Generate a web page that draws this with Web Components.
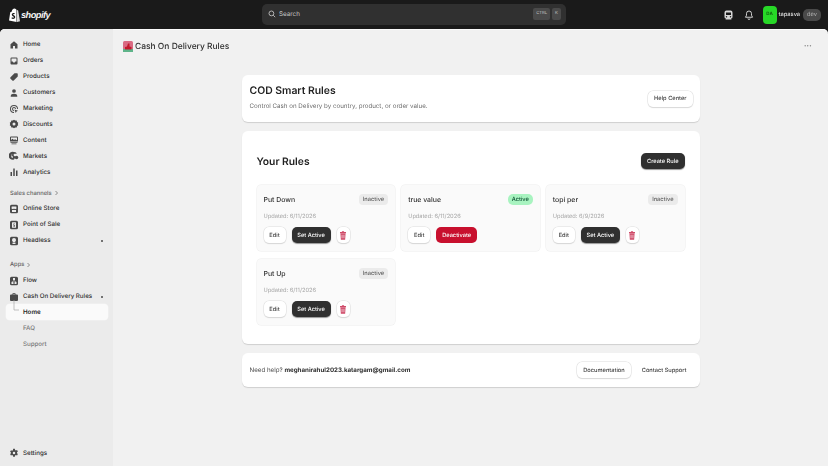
<!DOCTYPE html>
<html lang="en">
<head>
<meta charset="utf-8">
<title>Cash On Delivery Rules</title>
<style>
  html, body { height: 100%; margin: 0; overflow: hidden; }
  body {
    background: #1a1a1a;
    color: #303030;
    font-family: Inter, 'Noto Sans', sans-serif;
    text-rendering: geometricPrecision;
  }
  h2 { color: #222; font-size: 10.400px; font-weight: 600; margin: 0; }
  p { margin: 0; }
  .intro { align-items: center; display: flex; height: 47px; justify-content: space-between; padding: 0 7px 0 8px; }
  .intro p { color: #6b6b6b; font-size: 6.200px; margin: 6.500px 0 3px; }
  .rules { height: 213px; padding: 22px 15px 0; }
  .rules-head { align-items: center; display: flex; height: 16px; justify-content: space-between; }
  .rules-head h2 { font-size: 10.300px; margin-top: 1px; }
  .rules-grid { display: grid; gap: 8px 6px; grid-template-columns: repeat( 3, 1fr ); margin-top: 16px; }
  .help { align-items: center; display: flex; height: 34px; justify-content: space-between; padding: 0 7px 0 8px; }
  .help p { color: #4a4a4a; font-size: 6.200px; }
  .help b { color: #303030; font-weight: 700; }
  .help-links { align-items: center; display: flex; gap: 5px; }
</style>
</head>
<body>
<admin-shell>
  <admin-topbar slot="top"></admin-topbar>
  <admin-nav slot="nav">
    <nav-item icon="home">Home</nav-item>
    <nav-item icon="orders">Orders</nav-item>
    <nav-item icon="tag">Products</nav-item>
    <nav-item icon="person">Customers</nav-item>
    <nav-item icon="target">Marketing</nav-item>
    <nav-item icon="discount">Discounts</nav-item>
    <nav-item icon="content">Content</nav-item>
    <nav-item icon="globe">Markets</nav-item>
    <nav-item icon="bars">Analytics</nav-item>
    <nav-heading>Sales channels</nav-heading>
    <nav-item icon="store">Online Store</nav-item>
    <nav-item icon="pos">Point of Sale</nav-item>
    <nav-item icon="headless" dot>Headless</nav-item>
    <nav-heading gap>Apps</nav-heading>
    <nav-item icon="flow">Flow</nav-item>
    <nav-item icon="bag" dot>Cash On Delivery Rules</nav-item>
    <nav-item sub selected>Home</nav-item>
    <nav-item sub muted>FAQ</nav-item>
    <nav-item sub muted>Support</nav-item>
    <nav-item slot="bottom" icon="gear">Settings</nav-item>
  </admin-nav>
  <admin-page slot="main">
    <ui-card class="intro">
      <div>
        <h2>COD Smart Rules</h2>
        <p>Control Cash on Delivery by country, product, or order value.</p>
      </div>
      <ui-button>Help Center</ui-button>
    </ui-card>
    <ui-card class="rules">
      <div class="rules-head">
        <h2>Your Rules</h2>
        <ui-button kind="dark">Create Rule</ui-button>
      </div>
      <div class="rules-grid">
        <rule-card name="Put Down" updated="6/11/2026"></rule-card>
        <rule-card name="true value" updated="6/11/2026" active></rule-card>
        <rule-card name="topi per" updated="6/9/2026"></rule-card>
        <rule-card name="Put Up" updated="6/11/2026"></rule-card>
      </div>
    </ui-card>
    <ui-card class="help">
      <p>Need help? <b>meghanirahul2023.katargam@gmail.com</b></p>
      <div class="help-links">
        <ui-button>Documentation</ui-button>
        <ui-button kind="plain">Contact Support</ui-button>
      </div>
    </ui-card>
  </admin-page>
</admin-shell>

<script>
  const ICONS = {
    home: '<path d="M10 2.500 3 8.600V17h5v-5h4v5h5V8.600z"/>',
    orders: '<path fill-rule="evenodd" d="M5 3h10a2 2 0 0 1 2 2v10a2 2 0 0 1-2 2H5a2 2 0 0 1-2-2V5a2 2 0 0 1 2-2zm0 2v6h2.500l1 2h3l1-2H15V5z"/>',
    tag: '<path d="M11 2.500h5a1.500 1.500 0 0 1 1.500 1.500v5L9.500 17a2 2 0 0 1-2.800 0L3 13.300a2 2 0 0 1 0-2.800z"/>',
    person: '<circle cx="10" cy="6" r="3.700"/><path d="M3.500 17.500v-1.500c0-3 2.500-4.500 6.500-4.500s6.500 1.500 6.500 4.500v1.500z"/>',
    target: '<path fill-rule="evenodd" d="M10 2a8 8 0 0 1 8 8h-2a6 6 0 1 0-6 6v2a8 8 0 0 1 0-16zm0 4a4 4 0 0 1 4 4h-2a2 2 0 1 0-2 2v2a4 4 0 0 1 0-8z"/><path d="m11 11 7 2.500-3 1.500-1.500 3z"/>',
    discount: '<path fill-rule="evenodd" d="m10 1.500 2.400 1.700 2.900-.2.900 2.800 2.300 1.700-.9 2.500.9 2.500-2.300 1.700-.9 2.800-2.900-.2L10 18.500l-2.400-1.700-2.900.2-.9-2.800-2.300-1.700.9-2.500-.9-2.500 2.300-1.700.9-2.800 2.900.2zM10 7a3 3 0 1 0 0 6 3 3 0 0 0 0-6z"/>',
    content: '<path fill-rule="evenodd" d="M4 3h12a2 2 0 0 1 2 2v8H2V5a2 2 0 0 1 2-2zm0 2v5l3-2.500 3 2.500 2-1.500 4 2V5z"/><path d="M3 14.500h14V16H3zM5 17h10v1.500H5z"/>',
    globe: '<path fill-rule="evenodd" d="M10 2a7 7 0 0 1 5.500 2.700L14 6l-2-1-3 2 1 3 3 1-1 3-2 3a8 8 0 1 1 0-15zm-3 3.500A5.500 5.500 0 0 0 6 14l2-1-1-3-2-1z"/><circle cx="15" cy="13" r="3.500"/>',
    bars: '<path d="M3 10h3v8H3zM8.500 3h3v15h-3zM14 7h3v11h-3z"/>',
    store: '<path fill-rule="evenodd" d="M5 1.500h10A3 3 0 0 1 18 4.500v11a3 3 0 0 1-3 3H5a3 3 0 0 1-3-3v-11a3 3 0 0 1 3-3zM5.500 5 5 8.500c0 2 3 2 3.500.5.500 1.500 2.500 1.500 3 0 .5 1.500 3.500 1.500 3.500-.5L14.500 5zM6 11.500V16h8v-4.500c-1 .5-3 .5-4 0-1 .5-3 .5-4 0z"/>',
    pos: '<path fill-rule="evenodd" d="M5 1.500h10A3 3 0 0 1 18 4.500v11a3 3 0 0 1-3 3H5a3 3 0 0 1-3-3v-11a3 3 0 0 1 3-3zM7 4.500a1 1 0 0 0-1 1v9a1 1 0 0 0 1 1h6a1 1 0 0 0 1-1v-9a1 1 0 0 0-1-1zM9 7h2.500v1.500H10V10h1.500v3.500H9V12h1v-.5H9z"/>',
    headless: '<path fill-rule="evenodd" d="M5 1.500h10A3 3 0 0 1 18 4.500v11a3 3 0 0 1-3 3H5a3 3 0 0 1-3-3v-11a3 3 0 0 1 3-3zM10 4a4 4 0 0 0-4 4c0 1.500.7 2.500 1.500 3v1.500h5V11c.8-.5 1.500-1.500 1.500-3a4 4 0 0 0-4-4zm-3 9.500V16h6v-2.500z"/>',
    flow: '<path fill-rule="evenodd" d="M5 1.500h10A3 3 0 0 1 18 4.500v11a3 3 0 0 1-3 3H5a3 3 0 0 1-3-3v-11a3 3 0 0 1 3-3zM8 4v4h1.200v1.500L5 12v4h4v-3.500L7 12l3-1.800 3 1.800-2 .5V16h4v-4l-4.200-2.500V8H12V4z"/>',
    bag: '<path fill-rule="evenodd" d="M7 5V3.500A1.500 1.500 0 0 1 8.500 2h3A1.500 1.500 0 0 1 13 3.500V5h3a2 2 0 0 1 2 2v9a2 2 0 0 1-2 2H4a2 2 0 0 1-2-2V7a2 2 0 0 1 2-2zm1.500 0h3V3.500h-3z"/>',
    gear: '<path fill-rule="evenodd" d="m8.300 1.500h3.400l.5 2.400 1.600.9 2.300-.8 1.700 3-1.800 1.600v1.800l1.800 1.600-1.700 3-2.300-.8-1.600.9-.5 2.400H8.300l-.5-2.400-1.600-.9-2.300.8-1.700-3 1.800-1.600V9.200L2.200 7.600l1.700-3 2.300.8 1.600-.9zM10 7.500a2.500 2.500 0 1 0 0 5 2.500 2.500 0 0 0 0-5z"/>'
  };

  class AdminShell extends HTMLElement {
    constructor() {
      super();
      this.attachShadow( {mode: 'open'} ).innerHTML = `
        <style>
          :host { display: grid; filter: blur( 0.3px ); grid-template-rows: 29px 1fr; height: 100vh; }
          .frame {
            background: #f1f1f1;
            border-radius: 5px 5px 0 0;
            box-shadow: inset 0 1px 0 #fbfbfb;
            display: grid;
            grid-template-columns: 113px 1fr;
            min-height: 0;
            overflow: hidden;
          }
        </style>
        <slot name="top"></slot>
        <div class="frame">
          <slot name="nav"></slot>
          <slot name="main"></slot>
        </div>
      `;
    }
  }

  class AdminTopbar extends HTMLElement {
    constructor() {
      super();
      this.attachShadow( {mode: 'open'} ).innerHTML = `
        <style>
          :host {
            align-items: center;
            background: #1a1a1a;
            color: #e3e3e3;
            display: grid;
            grid-template-columns: 262px 304px 1fr;
            font-size: 6.300px;
          }
          .logo { align-items: center; display: flex; gap: 1px; padding-left: 9px; }
          .logo b {
            color: #f5f5f5;
            font: italic 700 9.200px 'Liberation Sans', sans-serif;
            letter-spacing: -.5px;
          }
          .search {
            align-items: center;
            background: #303030;
            border-radius: 5px;
            box-sizing: border-box;
            color: #c4c4c4;
            display: flex;
            gap: 2px;
            height: 21px;
            padding: 0 5px 1px 6px;
          }
          .search span { flex: 1; margin-left: 1px; }
          .search kbd {
            background: #4a4a4a;
            border-radius: 2px;
            color: #b5b5b5;
            font: 500 4.200px Inter, sans-serif;
            line-height: 12px;
            padding: 0 3px;
          }
          .right { align-items: center; display: flex; justify-content: flex-end; padding-right: 7px; }
          .right svg { display: block; }
          .train { margin-right: 11px; }
          .bell { margin-right: 9px; }
          .avatar {
            align-items: center;
            background: #27d827;
            border-radius: 4px;
            color: #0f5d0f;
            display: flex;
            font-size: 4.500px;
            font-weight: 700;
            height: 18px;
            justify-content: center;
            margin-right: 2px;
            width: 14px;
          }
          .user { font-size: 5.700px; font-weight: 500; margin-right: 3px; }
          .dev {
            background: #4a4a4a;
            border-radius: 5px;
            color: #b5b5b5;
            font-size: 5.700px;
            line-height: 12px;
            padding: 0 4px;
          }
        </style>
        <div class="logo">
          <svg width="11" height="14" viewBox="0 0 22 28" fill="#fff">
            <path d="M15 3.500 13.500 2C12.500.5 10 .2 8 2 6.500 3.500 5.500 5.500 5.200 7.500L2.500 8.300 0 25l15 3z"/>
            <path d="M16 4v23.800L22 26.300 18.300 5z" fill="#d9d9d9"/>
            <path d="M11.500 10.500c-3-1-6 .5-6 3.200 0 2.800 4 3 4 4.700 0 1.300-2 1.300-3.700.2l-.8 2.600c2.700 1.500 7.500 1 7.500-3 0-3.300-4-3.500-4-5 0-1 1.300-1.200 2.500-.7z" fill="#1a1a1a"/>
          </svg>
          <b>shopify</b>
        </div>
        <div class="search">
          <svg width="8" height="8" viewBox="0 0 20 20" fill="none" stroke="#d0d0d0" stroke-width="2">
            <circle cx="8.500" cy="8.500" r="6"/><path d="m13 13 5 5"/>
          </svg>
          <span>Search</span>
          <kbd>CTRL</kbd><kbd>K</kbd>
        </div>
        <div class="right">
          <svg class="train" width="9" height="10" viewBox="0 0 18 20" fill="#d8d8d8">
            <path fill-rule="evenodd" d="M5 1h8a4 4 0 0 1 4 4v9a3 3 0 0 1-3 3l1 2H3l1-2a3 3 0 0 1-3-3V5a4 4 0 0 1 4-4zM4 5v5h10V5zm1 7a1.500 1.500 0 1 0 0 3 1.500 1.500 0 0 0 0-3zm8 0a1.500 1.500 0 1 0 0 3 1.500 1.500 0 0 0 0-3z"/>
          </svg>
          <svg class="bell" width="10" height="10" viewBox="0 0 20 20" fill="none" stroke="#e3e3e3" stroke-width="1.800">
            <path d="M10 2a5 5 0 0 0-5 5v3.500L3 14.500h14l-2-4V7a5 5 0 0 0-5-5z"/><path d="M8 17a2 2 0 0 0 4 0"/>
          </svg>
          <div class="avatar">DA</div>
          <span class="user">tapasva</span>
          <span class="dev">dev</span>
        </div>
      `;
    }
  }

  class AdminNav extends HTMLElement {
    constructor() {
      super();
      this.attachShadow( {mode: 'open'} ).innerHTML = `
        <style>
          :host {
            background: #ebebeb;
            box-sizing: border-box;
            display: flex;
            flex-direction: column;
            justify-content: space-between;
            padding: 8px 5px 5px 6px;
          }
          .top { display: flex; flex-direction: column; }
        </style>
        <div class="top"><slot></slot></div>
        <slot name="bottom"></slot>
      `;
    }
  }

  class NavHeading extends HTMLElement {
    constructor() {
      super();
      this.attachShadow( {mode: 'open'} ).innerHTML = `
        <style>
          :host {
            align-items: center;
            color: #616161;
            display: flex;
            font-size: 5.800px;
            font-weight: 500;
            gap: 2px;
            height: 16px;
            margin-top: 5px;
            padding-left: 4px;
          }
          :host([gap]) { margin-top: 8px; }
          svg { display: block; }
        </style>
        <slot></slot>
        <svg width="5" height="6" viewBox="0 0 5 6" fill="none" stroke="#616161" stroke-width=".7"><path d="m1.500 1 2 2-2 2"/></svg>
      `;
    }
  }

  class NavItem extends HTMLElement {
    constructor() {
      super();
      const icon = ICONS[this.getAttribute( 'icon' )];
      const glyph = icon
        ? `<svg width="10" height="10" viewBox="0 0 20 20" fill="#4a4a4a">${icon}</svg>`
        : '<span class="blank"></span>';
      const dot = this.hasAttribute( 'dot' ) ? '<i></i>' : '';
      const elbow = this.hasAttribute( 'selected' )
        ? '<svg class="elbow" width="8" height="15" viewBox="0 0 8 15" fill="none" stroke="#a8a8a8" stroke-width=".7"><path d="M2 0v10h5"/></svg>'
        : '';
      this.attachShadow( {mode: 'open'} ).innerHTML = `
        <style>
          :host {
            align-items: center;
            border-radius: 4px;
            color: #303030;
            display: flex;
            font-size: 6.200px;
            font-weight: 500;
            gap: 4px;
            height: 15.900px;
            padding-left: 3px;
            position: relative;
            white-space: nowrap;
          }
          :host([selected]) {
            background: #fafafa;
            box-shadow: 0 0 0 .5px #f4f4f4;
            color: #1f1f1f;
            font-weight: 600;
          }
          :host([muted]) { color: #7a7a7a; }
          svg { display: block; flex: none; }
          .blank { flex: none; width: 10px; }
          .elbow { left: 6px; position: absolute; top: -4px; }
          i {
            background: #4a4a4a;
            border-radius: 50%;
            height: 2px;
            position: absolute;
            right: 5px;
            width: 2px;
          }
        </style>
        ${glyph}${elbow}<slot></slot>${dot}
      `;
    }
  }

  class AdminPage extends HTMLElement {
    constructor() {
      super();
      this.attachShadow( {mode: 'open'} ).innerHTML = `
        <style>
          :host { display: block; min-width: 0; padding: 0 10px 0 10px; }
          .title {
            align-items: center;
            color: #303030;
            display: flex;
            font-size: 8.450px;
            font-weight: 550;
            gap: 2px;
            height: 35px;
          }
          .title span { flex: 1; }
          .more { color: #8a8a8a; font-size: 4.500px; letter-spacing: .3px; padding-right: 6px; }
          .column {
            display: grid;
            gap: 9px;
            margin: 11px auto 0;
            width: 458px;
          }
        </style>
        <div class="title">
          <svg width="10" height="11" viewBox="0 0 10 11">
            <rect width="10" height="11" rx="1.500" fill="#d96a82"/>
            <rect x="0" y="8" width="10" height="3" fill="#5fb48a"/>
            <path d="M2 8.500V6l2-.5L5 2.500h1.500v3L8.500 6v2.500z" fill="#c2182c"/>
          </svg>
          <span>Cash On Delivery Rules</span>
          <div class="more">•••</div>
        </div>
        <div class="column"><slot></slot></div>
      `;
    }
  }

  class UiCard extends HTMLElement {
    constructor() {
      super();
      this.attachShadow( {mode: 'open'} ).innerHTML = `
        <style>
          :host {
            background: #fff;
            border-radius: 6px;
            box-shadow: 0 1px 1px rgba( 0, 0, 0, 0.14 );
            box-sizing: border-box;
            display: block;
          }
        </style>
        <slot></slot>
      `;
    }
  }

  class UiButton extends HTMLElement {
    constructor() {
      super();
      this.attachShadow( {mode: 'open'} ).innerHTML = `
        <style>
          :host {
            align-items: center;
            background: #fff;
            border-radius: 5px;
            box-shadow: 0 0 0 .5px #dcdcdc, 0 1px 1px rgba( 0, 0, 0, 0.16 );
            box-sizing: border-box;
            color: #404040;
            display: inline-flex;
            flex: none;
            font-size: 5.700px;
            font-weight: 550;
            height: 16px;
            justify-content: center;
            padding: 0 6px;
            white-space: nowrap;
          }
          :host([kind=dark]) { background: #303030; box-shadow: 0 1px 1px rgba( 0, 0, 0, 0.4 ); color: #fff; }
          :host([kind=danger]) { background: #c8102e; box-shadow: none; color: #fff; }
          :host([kind=plain]) { background: none; box-shadow: none; }
          :host([kind=icon]) { padding: 0; width: 13px; }
        </style>
        <slot></slot>
      `;
    }
  }

  class RuleCard extends HTMLElement {
    constructor() {
      super();
      const active = this.hasAttribute( 'active' );
      const actions = active
        ? '<ui-button kind="danger" class="wide">Deactivate</ui-button>'
        : `<ui-button kind="dark" class="set">Set Active</ui-button>
           <ui-button kind="icon">
             <svg width="6" height="9" viewBox="0 0 14 20" fill="#cf4a68">
               <path fill-rule="evenodd" d="M5 0h4l1 2h4v2.500H0V2h4zM1 5.500h12L12 20H2zm3 3v8h1.500v-8zm4.500 0v8H10v-8z"/>
             </svg>
           </ui-button>`;
      this.attachShadow( {mode: 'open'} ).innerHTML = `
        <style>
          :host {
            background: #fafafa;
            border-radius: 4px;
            box-shadow: 0 0 0 .5px #ececec;
            box-sizing: border-box;
            display: flex;
            flex-direction: column;
            height: 66px;
            padding: 9px 7px 8px;
          }
          .head { align-items: center; display: flex; height: 11px; justify-content: space-between; }
          .name { color: #303030; font-size: 6.900px; font-weight: 550; }
          .badge {
            background: #ebebeb;
            border-radius: 4px;
            color: #616161;
            font-size: 5.700px;
            font-weight: 500;
            line-height: 11px;
            padding: 0 4px;
          }
          .badge.on { background: #a8f3c0; color: #0c5132; border-radius: 5px; }
          .updated { color: #a3a3a3; font-size: 5.700px; margin-top: 8px; }
          .actions { align-items: center; display: flex; gap: 6px; margin-top: auto; }
          .edit { width: 22px; }
          .wide { width: 41px; }
          .set { width: 39px; }
        </style>
        <div class="head">
          <span class="name">${this.getAttribute( 'name' )}</span>
          <span class="badge ${active ? 'on' : ''}">${active ? 'Active' : 'Inactive'}</span>
        </div>
        <div class="updated">Updated: ${this.getAttribute( 'updated' )}</div>
        <div class="actions">
          <ui-button class="edit">Edit</ui-button>
          ${actions}
        </div>
      `;
    }
  }

  window.customElements.define( 'ui-button', UiButton );
  window.customElements.define( 'ui-card', UiCard );
  window.customElements.define( 'rule-card', RuleCard );
  window.customElements.define( 'nav-heading', NavHeading );
  window.customElements.define( 'nav-item', NavItem );
  window.customElements.define( 'admin-nav', AdminNav );
  window.customElements.define( 'admin-topbar', AdminTopbar );
  window.customElements.define( 'admin-page', AdminPage );
  window.customElements.define( 'admin-shell', AdminShell );
</script>
</body>
</html>
